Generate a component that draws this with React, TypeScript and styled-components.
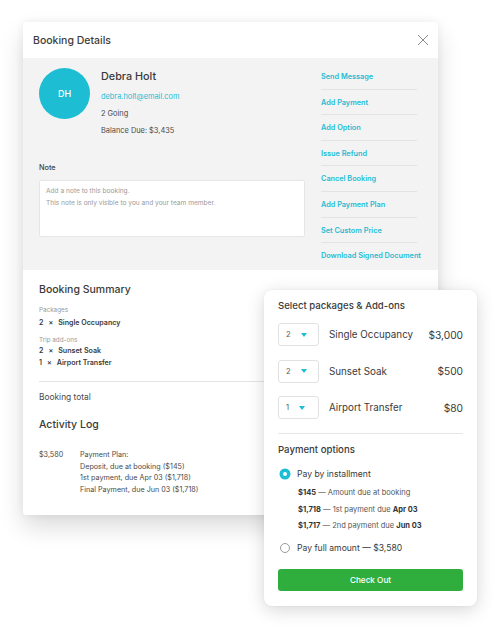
import React from "react";
import styled, { createGlobalStyle } from "styled-components";

const CYAN = "#1dbdd3";
const FONT = `"Inter", "Noto Sans", "DejaVu Sans", sans-serif`;

const Global = createGlobalStyle`
  html, body { margin: 0; padding: 0; background: #ffffff; }
  body { font-family: ${FONT}; color: #3a3a3a; -webkit-font-smoothing: antialiased; }
  * { box-sizing: border-box; }
`;

const Page = styled.div`
  position: relative;
  width: 500px;
  height: 628px;
  padding: 22px 0 0 23px;
  overflow: hidden;
`;

const MainCard = styled.div`
  width: 415px;
  height: 493px;
  background: #fff;
  border-radius: 3px;
  box-shadow: 0 12px 24px rgba(0, 0, 0, 0.14), 0 0 8px rgba(0, 0, 0, 0.06);
  display: flex;
  flex-direction: column;
  overflow: hidden;
`;

const Header = styled.div`
  height: 36px;
  flex: none;
  display: flex;
  align-items: center;
  justify-content: space-between;
  padding: 0 10px 0 10px;
`;

const Title = styled.div`
  font-size: 10.5px;
  font-weight: 500;
  color: #3d3d3d;
  margin-top: 1px;
`;

const CloseBtn = styled.div`
  width: 12px;
  height: 12px;
  display: flex;
  margin-right: -1px;
`;

const GreySection = styled.div`
  height: 212px;
  flex: none;
  background: #f3f3f3;
  display: flex;
  padding: 10px 16px 0 16px;
`;

const LeftCol = styled.div`
  width: 266px;
  display: flex;
  flex-direction: column;
`;

const ProfileRow = styled.div`
  display: flex;
  gap: 11px;
`;

const Avatar = styled.div`
  width: 51px;
  height: 51px;
  border-radius: 50%;
  background: ${CYAN};
  color: #fff;
  font-size: 9px;
  font-weight: 500;
  display: flex;
  align-items: center;
  justify-content: center;
  flex: none;
`;

const Info = styled.div`
  display: flex;
  flex-direction: column;
  gap: 5px;
`;

const Name = styled.div`
  font-size: 10.8px;
  font-weight: 500;
  line-height: 17px;
  color: #3a3a3a;
  margin-bottom: 1px;
`;

const InfoLine = styled.div<{ $link?: boolean }>`
  font-size: 7.4px;
  line-height: 12px;
  color: ${(p) => (p.$link ? CYAN : "#4a4a4a")};
`;

const NoteLabel = styled.div`
  margin-top: 25px;
  font-size: 7.3px;
  font-weight: 500;
  line-height: 12px;
  color: #444;
`;

const NoteBox = styled.div`
  margin-top: 6px;
  height: 57px;
  background: #fff;
  border: 1px solid #e6e6e6;
  border-radius: 2px;
  padding: 4px 6px;
  font-size: 6.6px;
  line-height: 12px;
  color: #9b9b9b;
`;

const Actions = styled.div`
  margin-left: 16px;
  margin-top: -4px;
  width: 96px;
  display: flex;
  flex-direction: column;
`;

const ActionItem = styled.div<{ $last?: boolean }>`
  padding: 7px 0 5.6px;
  line-height: 12px;
  font-size: 7.3px;
  font-weight: 600;
  color: ${CYAN};
  white-space: nowrap;
  border-bottom: 1px solid ${(p) => (p.$last ? "transparent" : "#e3e3e3")};
`;

const WhiteSection = styled.div`
  padding: 12px 16px 0 16px;
  display: flex;
  flex-direction: column;
`;

const SectionTitle = styled.div<{ $mt?: number }>`
  font-size: 10.5px;
  font-weight: 500;
  line-height: 16px;
  color: #3a3a3a;
  margin-top: ${(p) => p.$mt ?? 0}px;
`;

const SmallLabel = styled.div<{ $mt: number }>`
  font-size: 6.3px;
  line-height: 10px;
  color: #9a9a9a;
  margin-top: ${(p) => p.$mt}px;
`;

const ItemLine = styled.div<{ $mt?: number }>`
  font-size: 7.1px;
  font-weight: 600;
  line-height: 12px;
  color: #3a3a3a;
  margin-top: ${(p) => p.$mt ?? 0}px;
  display: flex;
  gap: 5px;
`;

const Divider = styled.div<{ $mt: number }>`
  height: 1px;
  background: #e4e4e4;
  margin-top: ${(p) => p.$mt}px;
`;

const TotalLabel = styled.div`
  margin-top: 9px;
  font-size: 8.4px;
  line-height: 12px;
  color: #4a4a4a;
`;

const LogRow = styled.div`
  margin-top: 16px;
  display: grid;
  grid-template-columns: 41px 1fr;
  font-size: 7.2px;
  line-height: 11.7px;
  color: #4a4a4a;
`;

const LogLines = styled.div`
  display: flex;
  flex-direction: column;
`;

/* ---------- right floating card ---------- */

const OrderCard = styled.div`
  position: absolute;
  left: 264px;
  top: 290px;
  width: 213px;
  height: 316px;
  background: #fff;
  border-radius: 8px;
  box-shadow: 0 4px 18px rgba(0, 0, 0, 0.16), 0 0 3px rgba(0, 0, 0, 0.05);
  padding: 9px 14px 0 14px;
  display: flex;
  flex-direction: column;
`;

const CardTitle = styled.div<{ $mt?: number }>`
  font-size: 9.6px;
  font-weight: 500;
  line-height: 14px;
  color: #3a3a3a;
  margin-top: ${(p) => p.$mt ?? 0}px;
`;

const PkgList = styled.div`
  margin-top: 10px;
  display: flex;
  flex-direction: column;
  gap: 13.7px;
`;

const PkgRow = styled.div`
  display: flex;
  align-items: center;
  height: 23px;
`;

const QtySelect = styled.div`
  width: 41px;
  height: 23px;
  border: 1px solid #e2e2e2;
  border-radius: 3px;
  display: flex;
  align-items: center;
  padding-left: 7px;
  gap: 10px;
  font-size: 7.5px;
  color: #555;
  flex: none;
`;

const Caret = styled.div`
  width: 0;
  height: 0;
  border-left: 3px solid transparent;
  border-right: 3px solid transparent;
  border-top: 4px solid ${CYAN};
`;

const PkgName = styled.div`
  margin-left: 10px;
  flex: 1;
  font-size: 9.8px;
  color: #3a3a3a;
`;

const PkgPrice = styled.div`
  font-size: 10.2px;
  color: #3a3a3a;
`;

const CardDivider = styled.div`
  height: 1px;
  background: #e6e6e6;
  margin-top: 14px;
`;

const RadioRow = styled.div<{ $mt: number }>`
  display: flex;
  align-items: center;
  gap: 7px;
  margin-top: ${(p) => p.$mt}px;
  font-size: 8.6px;
  line-height: 12px;
  color: #3a3a3a;
`;

const Radio = styled.div<{ $on?: boolean }>`
  width: 10px;
  height: 10px;
  border-radius: 50%;
  flex: none;
  margin-left: 2px;
  background: #fff;
  border: ${(p) => (p.$on ? `3px solid ${CYAN}` : "1px solid #9a9a9a")};
  box-shadow: ${(p) => (p.$on ? `0 0 0 0.5px ${CYAN}` : "none")};
`;

const InstallList = styled.div`
  margin-top: 7px;
  padding-left: 20px;
  display: flex;
  flex-direction: column;
  gap: 4.3px;
  font-size: 7.5px;
  line-height: 12px;
  color: #555;
`;

const Strong = styled.b`
  font-weight: 700;
  color: #333;
`;

const CheckoutButton = styled.div`
  margin-top: 15px;
  height: 22px;
  border-radius: 3px;
  background: #2fae3e;
  color: #fff;
  font-size: 8.2px;
  font-weight: 500;
  display: flex;
  align-items: center;
  justify-content: center;
`;

const actions = [
  "Send Message",
  "Add Payment",
  "Add Option",
  "Issue Refund",
  "Cancel Booking",
  "Add Payment Plan",
  "Set Custom Price",
  "Download Signed Document",
];

const packages = [
  { qty: 2, name: "Single Occupancy", price: "$3,000" },
  { qty: 2, name: "Sunset Soak", price: "$500" },
  { qty: 1, name: "Airport Transfer", price: "$80" },
];

export default function App() {
  return (
    <>
      <Global />
      <Page>
        <MainCard>
          <Header>
            <Title>Booking Details</Title>
            <CloseBtn>
              <svg width="12" height="12" viewBox="0 0 12 12">
                <path d="M1 1 L11 11 M11 1 L1 11" stroke="#8a8a8a" strokeWidth="1" fill="none" />
              </svg>
            </CloseBtn>
          </Header>
          <GreySection>
            <LeftCol>
              <ProfileRow>
                <Avatar>DH</Avatar>
                <Info>
                  <Name>Debra Holt</Name>
                  <InfoLine $link>debra.holt@email.com</InfoLine>
                  <InfoLine>2 Going</InfoLine>
                  <InfoLine>Balance Due: $3,435</InfoLine>
                </Info>
              </ProfileRow>
              <NoteLabel>Note</NoteLabel>
              <NoteBox>
                Add a note to this booking.
                <br />
                This note is only visible to you and your team member.
              </NoteBox>
            </LeftCol>
            <Actions>
              {actions.map((a, i) => (
                <ActionItem key={a} $last={i === actions.length - 1}>
                  {a}
                </ActionItem>
              ))}
            </Actions>
          </GreySection>
          <WhiteSection>
            <SectionTitle>Booking Summary</SectionTitle>
            <SmallLabel $mt={7}>Packages</SmallLabel>
            <ItemLine $mt={2}>
              <span>2</span>
              <span>×</span>
              <span>Single Occupancy</span>
            </ItemLine>
            <SmallLabel $mt={6}>Trip add-ons</SmallLabel>
            <ItemLine $mt={0}>
              <span>2</span>
              <span>×</span>
              <span>Sunset Soak</span>
            </ItemLine>
            <ItemLine>
              <span>1</span>
              <span>×</span>
              <span>Airport Transfer</span>
            </ItemLine>
            <Divider $mt={12} />
            <TotalLabel>Booking total</TotalLabel>
            <SectionTitle $mt={14}>Activity Log</SectionTitle>
            <LogRow>
              <span>$3,580</span>
              <LogLines>
                <span>Payment Plan:</span>
                <span>Deposit, due at booking ($145)</span>
                <span>1st payment, due Apr 03 ($1,718)</span>
                <span>Final Payment, due Jun 03 ($1,718)</span>
              </LogLines>
            </LogRow>
          </WhiteSection>
        </MainCard>

        <OrderCard>
          <CardTitle>Select packages &amp; Add-ons</CardTitle>
          <PkgList>
            {packages.map((p) => (
              <PkgRow key={p.name}>
                <QtySelect>
                  <span>{p.qty}</span>
                  <Caret />
                </QtySelect>
                <PkgName>{p.name}</PkgName>
                <PkgPrice>{p.price}</PkgPrice>
              </PkgRow>
            ))}
          </PkgList>
          <CardDivider />
          <CardTitle $mt={9}>Payment options</CardTitle>
          <RadioRow $mt={11}>
            <Radio $on />
            <span>Pay by installment</span>
          </RadioRow>
          <InstallList>
            <span>
              <Strong>$145</Strong> — Amount due at booking
            </span>
            <span>
              <Strong>$1,718</Strong> — 1st payment due <Strong>Apr 03</Strong>
            </span>
            <span>
              <Strong>$1,717</Strong> — 2nd payment due <Strong>Jun 03</Strong>
            </span>
          </InstallList>
          <RadioRow $mt={10}>
            <Radio />
            <span>Pay full amount — $3,580</span>
          </RadioRow>
          <CheckoutButton>Check Out</CheckoutButton>
        </OrderCard>
      </Page>
    </>
  );
}
